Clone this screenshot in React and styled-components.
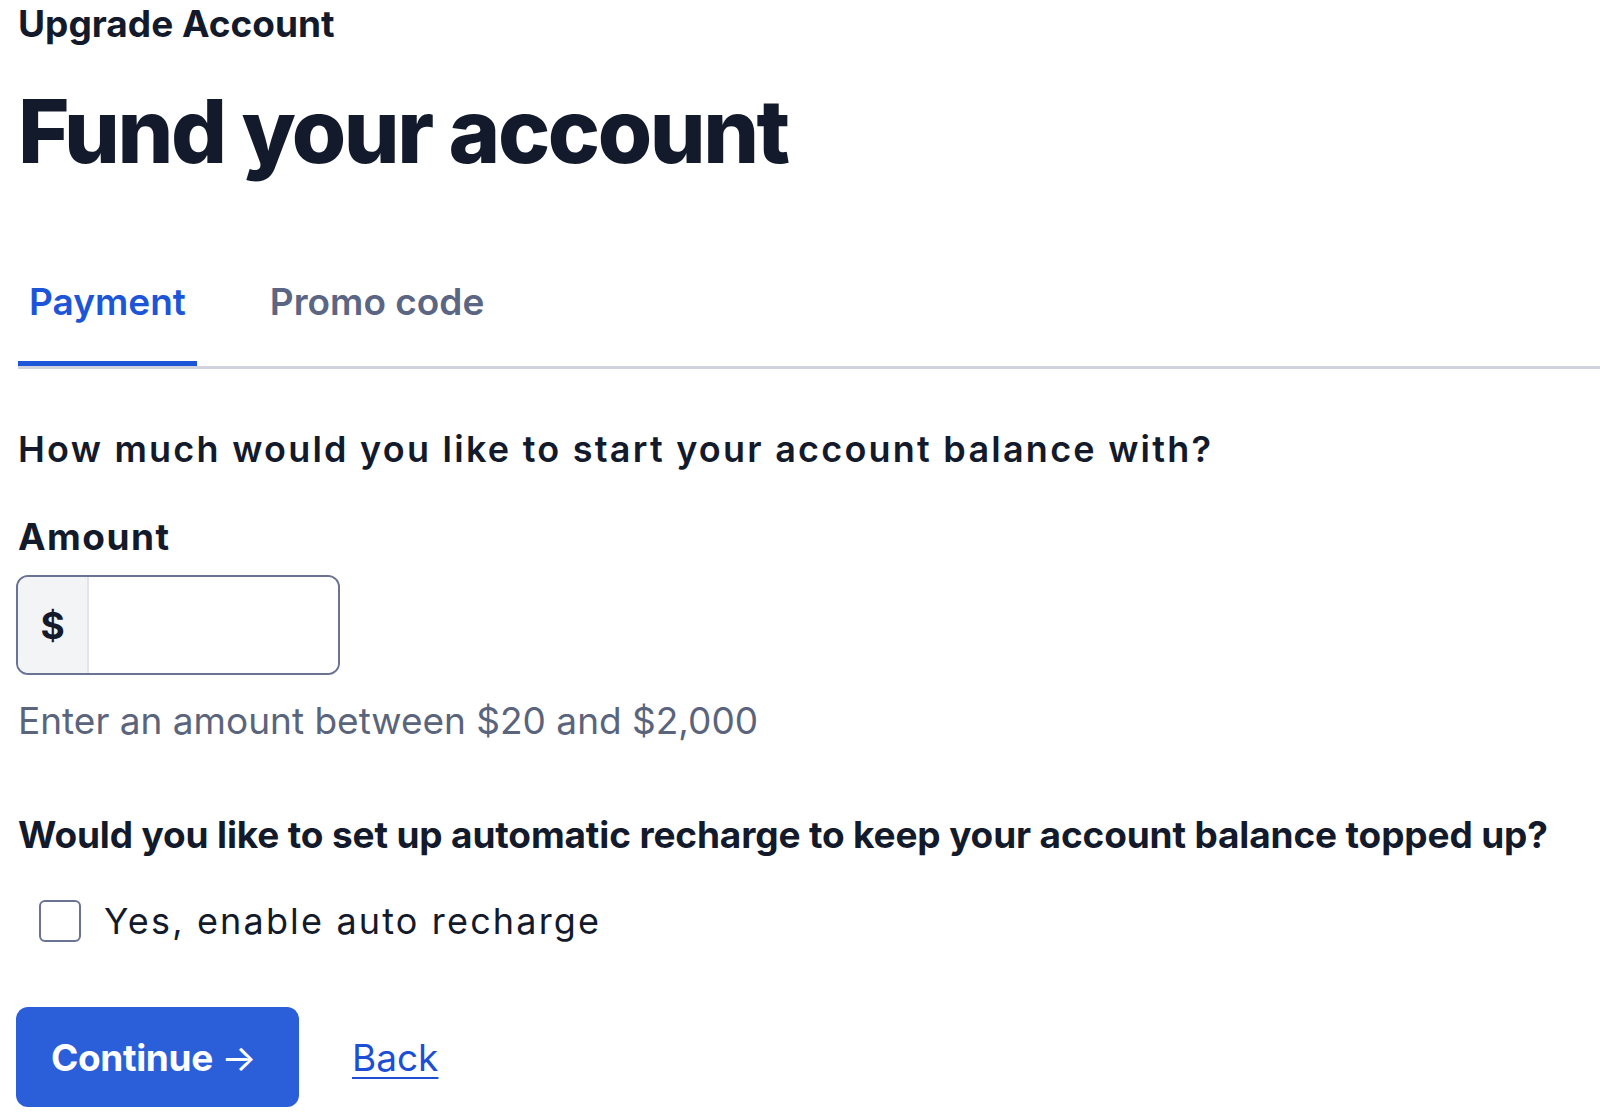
import React, { useState } from "react";
import styled, { createGlobalStyle } from "styled-components";

const GlobalStyle = createGlobalStyle`
  html, body {
    margin: 0;
    padding: 0;
    background: #ffffff;
  }
  body {
    font-family: Inter, "Noto Sans", "Liberation Sans", sans-serif;
    color: #131a2b;
  }
`;

const Page = styled.div`
  display: flex;
  flex-direction: column;
  align-items: flex-start;
  padding: 3px 0 0 18px;
`;

const Eyebrow = styled.div`
  font-size: 37px;
  line-height: 42px;
  font-weight: 700;
`;

const Title = styled.h1`
  margin: 36px 0 0;
  font-size: 88px;
  line-height: 100px;
  font-weight: 800;
  letter-spacing: -0.028em;
`;

const TabList = styled.div`
  align-self: stretch;
  display: flex;
  gap: 62px;
  margin-top: 99px;
  border-bottom: 3px solid #d0d3de;
`;

const Tab = styled.button`
  background: none;
  border: none;
  padding: 0 11px 37px;
  margin: 0;
  font-family: inherit;
  font-size: 37px;
  line-height: 44px;
  font-weight: 600;
  color: ${(p) => (p.$active ? "#1d55d8" : "#5b6584")};
  border-bottom: 5px solid ${(p) => (p.$active ? "#1d55d8" : "transparent")};
  cursor: pointer;
`;

const Question = styled.p`
  margin: ${(p) => p.$mt}px 0 0;
  font-size: ${(p) => (p.$tight ? 37 : 36)}px;
  line-height: 40px;
  font-weight: ${(p) => (p.$tight ? 700 : 600)};
  letter-spacing: ${(p) => (p.$tight ? "-0.004em" : "0.062em")};
`;

const Label = styled.label`
  margin-top: 48px;
  font-size: 37px;
  line-height: 40px;
  font-weight: 700;
  letter-spacing: 0.04em;
`;

const InputGroup = styled.div`
  margin: 18px 0 0 -2px;
  display: flex;
  width: 324px;
  height: 100px;
  box-sizing: border-box;
  border: 2px solid #6b7394;
  border-radius: 12px;
  overflow: hidden;
`;

const Prefix = styled.span`
  width: 69px;
  display: flex;
  align-items: center;
  justify-content: center;
  background: #f3f4f6;
  border-right: 2px solid #e2e4ea;
  font-size: 37px;
  font-weight: 700;
`;

const AmountInput = styled.input`
  flex: 1;
  min-width: 0;
  border: none;
  outline: none;
  padding: 0 20px;
  font-family: inherit;
  font-size: 36px;
  color: #131a2b;
`;

const Helper = styled.p`
  margin: 26px 0 0;
  font-size: 37px;
  line-height: 40px;
  color: #5a647c;
`;

const CheckRow = styled.label`
  margin: 45px 0 0 21px;
  display: flex;
  align-items: center;
  gap: 23px;
  height: 42px;
  font-size: 36px;
  letter-spacing: 0.06em;
  cursor: pointer;
`;

const Box = styled.span`
  width: 42px;
  height: 42px;
  box-sizing: border-box;
  border: 2px solid #6b7394;
  border-radius: 6px;
  background: #fff;
`;

const Actions = styled.div`
  margin: 65px 0 0 -2px;
  display: flex;
  align-items: center;
  gap: 53px;
`;

const PrimaryButton = styled.button`
  width: 283px;
  height: 100px;
  padding: 0 0 0 35px;
  border: none;
  border-radius: 12px;
  background: #2b5fd9;
  color: #ffffff;
  font-family: inherit;
  font-size: 37px;
  font-weight: 700;
  letter-spacing: -0.01em;
  text-align: left;
  cursor: pointer;
`;

const Arrow = styled.span`
  font-weight: 400;
`;

const BackLink = styled.a`
  font-size: 37px;
  color: #1d4fd6;
  text-decoration: underline;
  text-underline-offset: 6px;
  text-decoration-thickness: 2px;
  cursor: pointer;
`;

export default function App() {
  const [tab, setTab] = useState("payment");
  return (
    <>
      <GlobalStyle />
      <Page>
        <Eyebrow>Upgrade Account</Eyebrow>
        <Title>Fund your account</Title>
        <TabList>
          <Tab $active={tab === "payment"} onClick={() => setTab("payment")}>
            Payment
          </Tab>
          <Tab $active={tab === "promo"} onClick={() => setTab("promo")}>
            Promo code
          </Tab>
        </TabList>
        <Question $mt={60}>
          How much would you like to start your account balance with?
        </Question>
        <Label htmlFor="amount">Amount</Label>
        <InputGroup>
          <Prefix>$</Prefix>
          <AmountInput id="amount" type="text" />
        </InputGroup>
        <Helper>Enter an amount between $20 and $2,000</Helper>
        <Question $mt={74} $tight>
          Would you like to set up automatic recharge to keep your account
          balance topped up?
        </Question>
        <CheckRow>
          <Box />
          Yes, enable auto recharge
        </CheckRow>
        <Actions>
          <PrimaryButton>
            Continue <Arrow>→</Arrow>
          </PrimaryButton>
          <BackLink>Back</BackLink>
        </Actions>
      </Page>
    </>
  );
}
